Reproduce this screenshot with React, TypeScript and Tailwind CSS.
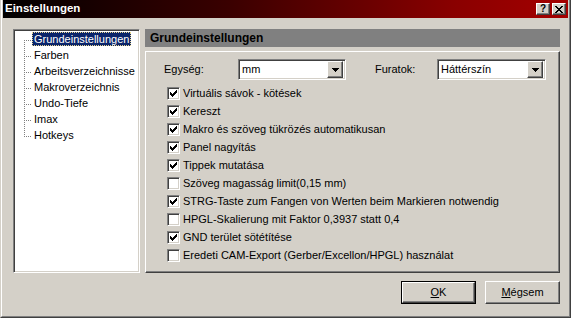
import React from 'react';

const FONT = { fontFamily: '"Liberation Sans", Arial, sans-serif' };

const raised =
  'border border-t-white border-l-white border-r-[#404040] border-b-[#404040] shadow-[inset_-1px_-1px_#808080]';
const sunken =
  'border border-t-[#808080] border-l-[#808080] border-r-white border-b-white shadow-[inset_1px_1px_#404040,inset_-1px_-1px_#d4d0c8]';

const TREE = ['Grundeinstellungen', 'Farben', 'Arbeitsverzeichnisse', 'Makroverzeichnis', 'Undo-Tiefe', 'Imax', 'Hotkeys'];

const OPTIONS: { label: string; checked: boolean }[] = [
  { label: 'Virtuális sávok - kötések', checked: true },
  { label: 'Kereszt', checked: true },
  { label: 'Makro és szöveg tükrözés automatikusan', checked: true },
  { label: 'Panel nagyítás', checked: true },
  { label: 'Tippek mutatása', checked: true },
  { label: 'Szöveg magasság limit(0,15 mm)', checked: false },
  { label: 'STRG-Taste zum Fangen von Werten beim Markieren notwendig', checked: true },
  { label: 'HPGL-Skalierung mit Faktor 0,3937 statt 0,4', checked: false },
  { label: 'GND terület sötétítése', checked: true },
  { label: 'Eredeti CAM-Export (Gerber/Excellon/HPGL) használat', checked: false },
];

const Combo: React.FC<{ value: string; width: string }> = ({ value, width }) => (
  <div className={`${sunken} ${width} h-[21px] bg-white flex items-center p-[2px]`}>
    <span className="flex-1 pl-[1px] text-[11px] text-black leading-none">{value}</span>
    <div className={`${raised} bg-[#d4d0c8] w-[16px] h-[17px] flex items-center justify-center`}>
      <svg width="7" height="4" viewBox="0 0 7 4" shapeRendering="crispEdges">
        <path d="M0 0h7v1H0zM1 1h5v1H1zM2 2h3v1H2zM3 3h1v1H3z" fill="#000" />
      </svg>
    </div>
  </div>
);

const Check: React.FC<{ checked: boolean }> = ({ checked }) => (
  <div className={`${sunken} w-[13px] h-[13px] bg-white flex items-center justify-center shrink-0`}>
    {checked && (
      <svg width="7" height="7" viewBox="0 0 7 7" shapeRendering="crispEdges">
        <path d="M6 0h1v3H6zM5 1h1v3H5zM4 2h1v3H4zM3 3h1v3H3zM2 4h1v3H2zM1 3h1v3H1zM0 2h1v3H0z" fill="#000" />
      </svg>
    )}
  </div>
);

const TreeLines: React.FC = () => (
  <svg width="16" height="112" viewBox="0 0 16 112" shapeRendering="crispEdges" className="shrink-0">
    {Array.from({ length: 49 }).map((_, i) => (
      <rect key={`v${i}`} x="8" y={8 + i * 2} width="1" height="1" fill="#808080" />
    ))}
    {TREE.map((_, r) =>
      [10, 12, 14].map((x) => <rect key={`h${r}-${x}`} x={x} y={8 + r * 16} width="1" height="1" fill="#808080" />)
    )}
  </svg>
);

export default function App() {
  return (
    <div style={FONT} className="w-[571px] h-[318px] bg-[#d4d0c8] border-l border-r border-b border-l-[#d4d0c8] border-r-[#404040] border-b-[#404040]">
      <div className="h-full flex flex-col border-l border-r border-b border-l-white border-r-[#808080] border-b-[#808080] px-[1px] pb-[1px]">
        {/* title bar */}
        <div className="h-[18px] shrink-0 flex items-center pl-[2px] pr-[2px] bg-[linear-gradient(to_right,#000000_0%,#3a0000_40%,#8a0000_80%,#a40000_100%)]">
          <span className="flex-1 text-white font-bold text-[11.5px] leading-none">Einstellungen</span>
          <div className={`${raised} bg-[#d4d0c8] w-[14px] h-[12px] flex items-center justify-center`}>
            <span className="text-[10px] font-bold leading-none text-black">?</span>
          </div>
          <div className={`${raised} bg-[#d4d0c8] w-[14px] h-[12px] ml-[2px] flex items-center justify-center`}>
            <svg width="8" height="7" viewBox="0 0 8 7" shapeRendering="crispEdges">
              <path d="M0 0h2v1H0zM6 0h2v1H6zM1 1h2v1H1zM5 1h2v1H5zM2 2h4v1H2zM3 3h2v1H3zM2 4h4v1H2zM1 5h2v1H1zM5 5h2v1H5zM0 6h2v1H0zM6 6h2v1H6z" fill="#000" />
            </svg>
          </div>
        </div>

        {/* main area */}
        <div className="flex gap-[5px] pl-[10px] pt-[11px]">
          <div className={`${sunken} w-[127px] h-[244px] bg-white p-[2px] flex`}>
            <TreeLines />
            <div className="flex flex-col">
              {TREE.map((t, i) => (
                <div key={t} className="h-[16px] flex items-start">
                  {i === 0 ? (
                    <span className="h-[14px] px-[1px] bg-[#0a246a] text-white text-[11px] leading-[12px] border border-dotted border-[#e6d58f]">
                      {t}
                    </span>
                  ) : (
                    <span className="h-[14px] px-[2px] pt-[1px] text-black text-[11px] leading-[12px]">{t}</span>
                  )}
                </div>
              ))}
            </div>
          </div>

          <div className="w-[415px] flex flex-col">
            <div className="h-[18px] bg-[#808080] flex items-center pl-[5px]">
              <span className="text-[12px] font-bold text-black leading-none">Grundeinstellungen</span>
            </div>
            <div className="mt-[4px] h-[222px] border border-t-white border-l-white border-r-[#404040] border-b-[#404040] shadow-[inset_-1px_-1px_#808080] pt-[7px]">
              <div className="flex items-center pl-[18px]">
                <span className="w-[74px] text-[11px] text-black">Egység:</span>
                <Combo value="mm" width="w-[108px]" />
                <span className="ml-[29px] w-[62px] text-[11px] text-black">Furatok:</span>
                <Combo value="Háttérszín" width="w-[109px]" />
              </div>
              <div className="mt-[4px] pl-[21px] flex flex-col">
                {OPTIONS.map((o) => (
                  <div key={o.label} className="h-[18px] flex items-center gap-[3px]">
                    <Check checked={o.checked} />
                    <span className="text-[11px] text-black leading-none whitespace-nowrap">{o.label}</span>
                  </div>
                ))}
              </div>
            </div>
          </div>
        </div>

        {/* buttons */}
        <div className="flex justify-end gap-[9px] pr-[8px] mt-[8px]">
          <div className="border border-black">
            <button className={`${raised} bg-[#d4d0c8] w-[73px] h-[21px] text-[11px] text-black flex items-center justify-center`}>
              <span><span className="underline">O</span>K</span>
            </button>
          </div>
          <button className={`${raised} bg-[#d4d0c8] w-[75px] h-[23px] text-[11px] text-black flex items-center justify-center`}>
            <span><span className="underline">M</span>égsem</span>
          </button>
        </div>
      </div>
    </div>
  );
}
